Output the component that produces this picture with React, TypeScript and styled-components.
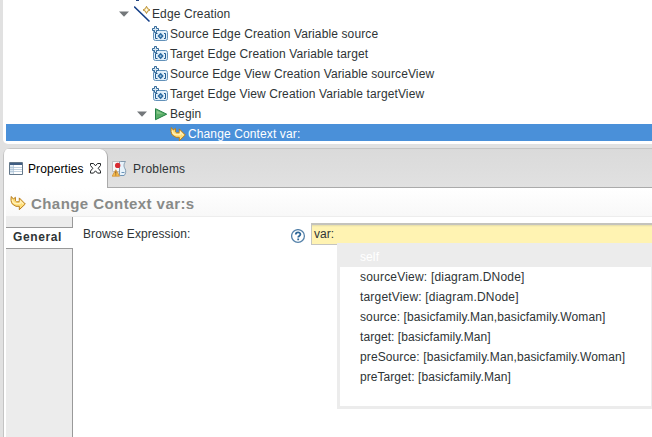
import React from "react";
import styled, { createGlobalStyle } from "styled-components";

const GlobalStyle = createGlobalStyle`
  * { box-sizing: border-box; }
  html, body { margin: 0; padding: 0; }
  body {
    width: 652px;
    height: 437px;
    overflow: hidden;
    background: #e1e1e1;
    color: #2e3436;
    font: 12px/20px "Liberation Sans", Arial, sans-serif;
  }
  svg { display: block; flex: none; }
`;

const Workbench = styled.main`
  width: 652px;
  height: 437px;
  padding-left: 3px;
  display: flex;
  flex-direction: column;
  overflow: hidden;
`;

const TreePanel = styled.section`
  height: 144px;
  flex: none;
  padding-left: 3px;
  background: #fff;
  border-bottom-left-radius: 5px;
  overflow: hidden;
`;

const TreeSliver = styled.div`
  height: 4px;
  padding-left: 129px;
`;

const TreeRow = styled.div<{ $indent: number; $selected?: boolean }>`
  height: ${(p) => (p.$selected ? 17 : 20)}px;
  padding-top: ${(p) => (p.$selected ? 2 : 0)}px;
  padding-left: ${(p) => p.$indent}px;
  display: flex;
  align-items: center;
  white-space: pre;
  background: ${(p) => (p.$selected ? "#4a90d9" : "transparent")};
  color: ${(p) => (p.$selected ? "#fff" : "#2e3436")};
`;

const Twisty = styled.span`
  width: 15px;
  flex: none;
`;

const IconCell = styled.span`
  width: 18px;
  height: 16px;
  flex: none;
`;

const Label = styled.span<{ $spacing?: number }>`
  letter-spacing: ${(p) => p.$spacing ?? 0.12}px;
  white-space: pre;
`;

const ViewPanel = styled.section`
  margin-top: 4px;
  flex: 1;
  display: flex;
  flex-direction: column;
  border-left: 1px solid #c4c4c4;
  border-top-left-radius: 7px;
  background: #fff;
  overflow: hidden;
`;

const TabBar = styled.div`
  height: 40px;
  flex: none;
  display: flex;
  border-top: 1px solid #c6c6c6;
  background: linear-gradient(#dadada, #e1e1e1);
  box-shadow: inset 0 -1px #aaa;
`;

const ViewTab = styled.div<{ $active?: boolean }>`
  height: 39px;
  width: ${(p) => (p.$active ? 104 : 90)}px;
  padding-left: ${(p) => (p.$active ? 5 : 4)}px;
  display: flex;
  align-items: center;
  color: ${(p) => (p.$active ? "#000" : "#2e3436")};
  background: ${(p) => (p.$active ? "#fff" : "transparent")};
  border-right: ${(p) => (p.$active ? "1px solid #aaa" : "0")};
  border-top-right-radius: 8px;
`;

const TabLabel = styled.span<{ $spacing: number }>`
  padding-left: 5px;
  width: 67px;
  flex: none;
  letter-spacing: ${(p) => p.$spacing}px;
`;

const Header = styled.header`
  height: 29px;
  flex: none;
  margin-left: 2px;
  padding-left: 4px;
  display: flex;
  align-items: center;
  background: linear-gradient(#fff, #f8f8f8);
  border-bottom: 1px solid #ededed;
`;

const HeaderIcon = styled.span`
  margin-top: 2px;
`;

const Title = styled.h1`
  margin: 3px 0 0 5px;
  font-size: 15px;
  line-height: 20px;
  font-weight: bold;
  letter-spacing: 0.43px;
  color: #888a88;
  white-space: nowrap;
`;

const Body = styled.div`
  flex: 1;
  display: flex;
  padding-left: 2px;
`;

const Sidebar = styled.nav`
  width: 67px;
  flex: none;
  display: flex;
  flex-direction: column;
`;

const SidebarFill = styled.div<{ $height?: number }>`
  ${(p) => (p.$height ? `height: ${p.$height}px;` : "flex: 1;")}
  background: #ececec;
  border-right: 1px solid #999;
`;

const SidebarTab = styled.div`
  height: 22px;
  padding-left: 7px;
  border-top: 1px solid #999;
  border-bottom: 1px solid #999;
  background: #fff;
  font-weight: bold;
  letter-spacing: 0.6px;
  line-height: 19px;
`;

const Form = styled.div`
  flex: 1;
  min-width: 0;
  padding: 6px 0 0 10px;
  display: flex;
  align-items: flex-start;
`;

const FieldLabel = styled.label`
  width: 208px;
  flex: none;
  line-height: 22px;
  letter-spacing: 0.07px;
`;

const HelpCell = styled.span`
  width: 20px;
  padding-top: 6px;
  flex: none;
`;

const Field = styled.div`
  position: relative;
  flex: 1;
  height: 22px;
  padding-left: 2px;
  background: linear-gradient(#e3dba8, #fff3b2 2px);
  border: 1px solid #c5c5c0;
  border-right: 0;
  border-top: 2px solid #c4c3bd;
  line-height: 18px;
`;

const Proposals = styled.ul`
  position: absolute;
  top: 18px;
  left: 25px;
  width: 315px;
  height: 166px;
  margin: 0;
  padding: 0;
  list-style: none;
  border: 3px solid #ececec;
  border-top: 4px solid #ececec;
  border-right-width: 1px;
  background: #fff;
`;

const Proposal = styled.li<{ $selected?: boolean; $spacing: number }>`
  height: 20px;
  padding-left: 20px;
  line-height: 20px;
  letter-spacing: ${(p) => p.$spacing}px;
  white-space: pre;
  background: ${(p) => (p.$selected ? "#ececec" : "transparent")};
  color: ${(p) => (p.$selected ? "#fff" : "#2e3436")};
`;

const Triangle = () => (
  <svg width="10" height="6" viewBox="0 0 10 6">
    <path d="M0 .5h10L5 5.8z" fill="#73777a" />
  </svg>
);

const EdgeIcon = () => (
  <svg width="17" height="17" viewBox="0 0 17 17">
    <path d="M0 .5 15.5 15.5" stroke="#123d86" strokeWidth="1.6" />
    <path d="m12.5 .3 1.2 2.3L16 4l-2.3 1.2-1.2 2.3-1.2-2.3L9 4l2.3-1.4z" fill="#f7df94" stroke="#bb923c" />
    <path d="M12.5 2.5v3M11 4h3" stroke="#fff" strokeWidth=".8" />
  </svg>
);

const VariableIcon = () => (
  <svg width="16" height="16" viewBox="0 0 16 16">
    <rect x="1.5" y="4.5" width="14" height="10" rx="2" fill="#e1effa" stroke="#6291b9" />
    <path d="M5.5 7.5h-2v5h2M12 7.5h1.5v5H12" fill="none" stroke="#235c91" />
    <path d="m8.6 6.8 3.1 3.2-3.1 3.2L5.5 10z" fill="#2b689f" />
    <path d="m8.6 8.7 1.3 1.3-1.3 1.3L7.3 10z" fill="#91bddf" />
    <path d="M2.5.5h2v2h2v2h-2v2h-2v-2h-2v-2h2z" fill="#d9eaf5" stroke="#235c91" strokeWidth=".9" />
  </svg>
);

const PlayIcon = () => (
  <svg width="16" height="16" viewBox="0 0 16 16">
    <path d="M3.5 2.7v11L14.7 8.2z" fill="#5aae68" stroke="#238044" />
    <path d="M4.7 4.5 11 7.7H4.7z" fill="#88c78b" />
  </svg>
);

const ArrowIcon = () => (
  <svg width="16" height="16" viewBox="0 0 16 16">
    <path d="M1.3 1.5 3.4 4l2-1.7v3.4l1.2 1.1h2.7V2.9L15.3 9l-6 5.7v-3.4H6L2.5 9.2C.8 7 .8 4.2 1.3 1.5Z" fill="#ffdf79" stroke="#b87c1b" strokeLinejoin="round" />
    <path d="M2.2 4.6c.3 3 1.8 4 4.4 4h3.7V6L13.2 9" fill="none" stroke="#fff1bd" strokeWidth="1.1" />
  </svg>
);

const PropertiesIcon = () => (
  <svg width="14" height="13" viewBox="0 0 14 13">
    <path d="M.5.5h13v12H.5z" fill="#fff" stroke="#647789" />
    <path d="M1 1h12v2H1z" fill="#405e83" />
    <path d="M1 3.5h3v8H1z" fill="#dce8f2" />
    <path d="M4.5 3v9M1 5.5h12M1 7.5h12M1 9.5h12" stroke="#a8bed2" strokeWidth=".7" />
  </svg>
);

const CloseIcon = () => (
  <svg width="11" height="11" viewBox="0 0 11 11">
    <path d="M.5.5h3l2 2.3 2-2.3h3v2L8.2 5.3l2.3 2.8v2h-3l-2-2.3-2 2.3h-3v-2l2.3-2.8L.5 2.5z" fill="#fff" stroke="#202426" />
  </svg>
);

const ProblemsIcon = () => (
  <svg width="16" height="16" viewBox="0 0 16 16">
    <path d="M.5.5h8v10h-8z" fill="#f7f8f8" stroke="#bec1c3" />
    <path d="M8.5.5h5c-2.3 3-1.6 5.5-.3 7.5 1 2.3.6 4.5-1 6.5H7.5V.5z" fill="#e8f3fb" stroke="#8299ad" />
    <path d="M9.5 11.5h3M9 14.5h3" stroke="#6c94b9" />
    <circle cx="5.7" cy="4.4" r="2.7" fill="#d82c32" />
    <path d="m3.8 8.7 3.7 6.5H.1z" fill="#f7bd4c" stroke="#d09238" strokeWidth=".8" strokeLinejoin="round" />
    <path d="M3.8 10.4v2.3M3.8 13.4v1" stroke="#80501b" />
  </svg>
);

const HelpIcon = () => (
  <svg width="15" height="15" viewBox="0 0 15 15">
    <circle cx="7" cy="7" r="6.4" fill="#fff" stroke="#5582aa" strokeWidth="1.3" />
    <path d="M4.8 5.5c0-2.8 4.6-2.7 4.6-.2 0 1.7-2.2 1.6-2.2 3.2M7.2 9.6v1.7" fill="none" stroke="#2e6798" strokeWidth="1.8" />
  </svg>
);

const variables = [
  "Source Edge Creation Variable source",
  "Target Edge Creation Variable target",
  "Source Edge View Creation Variable sourceView",
  "Target Edge View Creation Variable targetView",
];

const proposals = [
  { text: "self", spacing: 0.1 },
  { text: "sourceView: [diagram.DNode]", spacing: 0.2 },
  { text: "targetView: [diagram.DNode]", spacing: 0.18 },
  { text: "source: [basicfamily.Man,basicfamily.Woman]", spacing: 0.11 },
  { text: "target: [basicfamily.Man]", spacing: 0.06 },
  { text: "preSource: [basicfamily.Man,basicfamily.Woman]", spacing: 0.11 },
  { text: "preTarget: [basicfamily.Man]", spacing: 0.06 },
];

export default function App() {
  return (
    <>
      <GlobalStyle />
      <Workbench>
        <TreePanel>
          <TreeSliver>
            <svg width="5" height="2" viewBox="0 0 5 2"><path d="M1 0h3v1H1z" fill="#254783" /></svg>
          </TreeSliver>
          <TreeRow $indent={113}>
            <Twisty><Triangle /></Twisty>
            <IconCell><EdgeIcon /></IconCell>
            <Label>Edge Creation</Label>
          </TreeRow>
          {variables.map((name) => (
            <TreeRow key={name} $indent={146}>
              <IconCell><VariableIcon /></IconCell>
              <Label>{name}</Label>
            </TreeRow>
          ))}
          <TreeRow $indent={131}>
            <Twisty><Triangle /></Twisty>
            <IconCell><PlayIcon /></IconCell>
            <Label>Begin</Label>
          </TreeRow>
          <TreeRow $indent={164} $selected>
            <IconCell><ArrowIcon /></IconCell>
            <Label>Change Context var:</Label>
          </TreeRow>
        </TreePanel>
        <ViewPanel>
          <TabBar>
            <ViewTab $active>
              <PropertiesIcon />
              <TabLabel $spacing={0.08}>Properties</TabLabel>
              <CloseIcon />
            </ViewTab>
            <ViewTab>
              <ProblemsIcon />
              <TabLabel $spacing={0.2}>Problems</TabLabel>
            </ViewTab>
          </TabBar>
          <Header>
            <HeaderIcon><ArrowIcon /></HeaderIcon>
            <Title>Change Context var:s</Title>
          </Header>
          <Body>
            <Sidebar>
              <SidebarFill $height={10} />
              <SidebarTab>General</SidebarTab>
              <SidebarFill />
            </Sidebar>
            <Form>
              <FieldLabel>Browse Expression:</FieldLabel>
              <HelpCell><HelpIcon /></HelpCell>
              <Field>
                var:
                <Proposals>
                  {proposals.map(({ text, spacing }, i) => (
                    <Proposal key={text} $selected={i === 0} $spacing={spacing}>{text}</Proposal>
                  ))}
                </Proposals>
              </Field>
            </Form>
          </Body>
        </ViewPanel>
      </Workbench>
    </>
  );
}
